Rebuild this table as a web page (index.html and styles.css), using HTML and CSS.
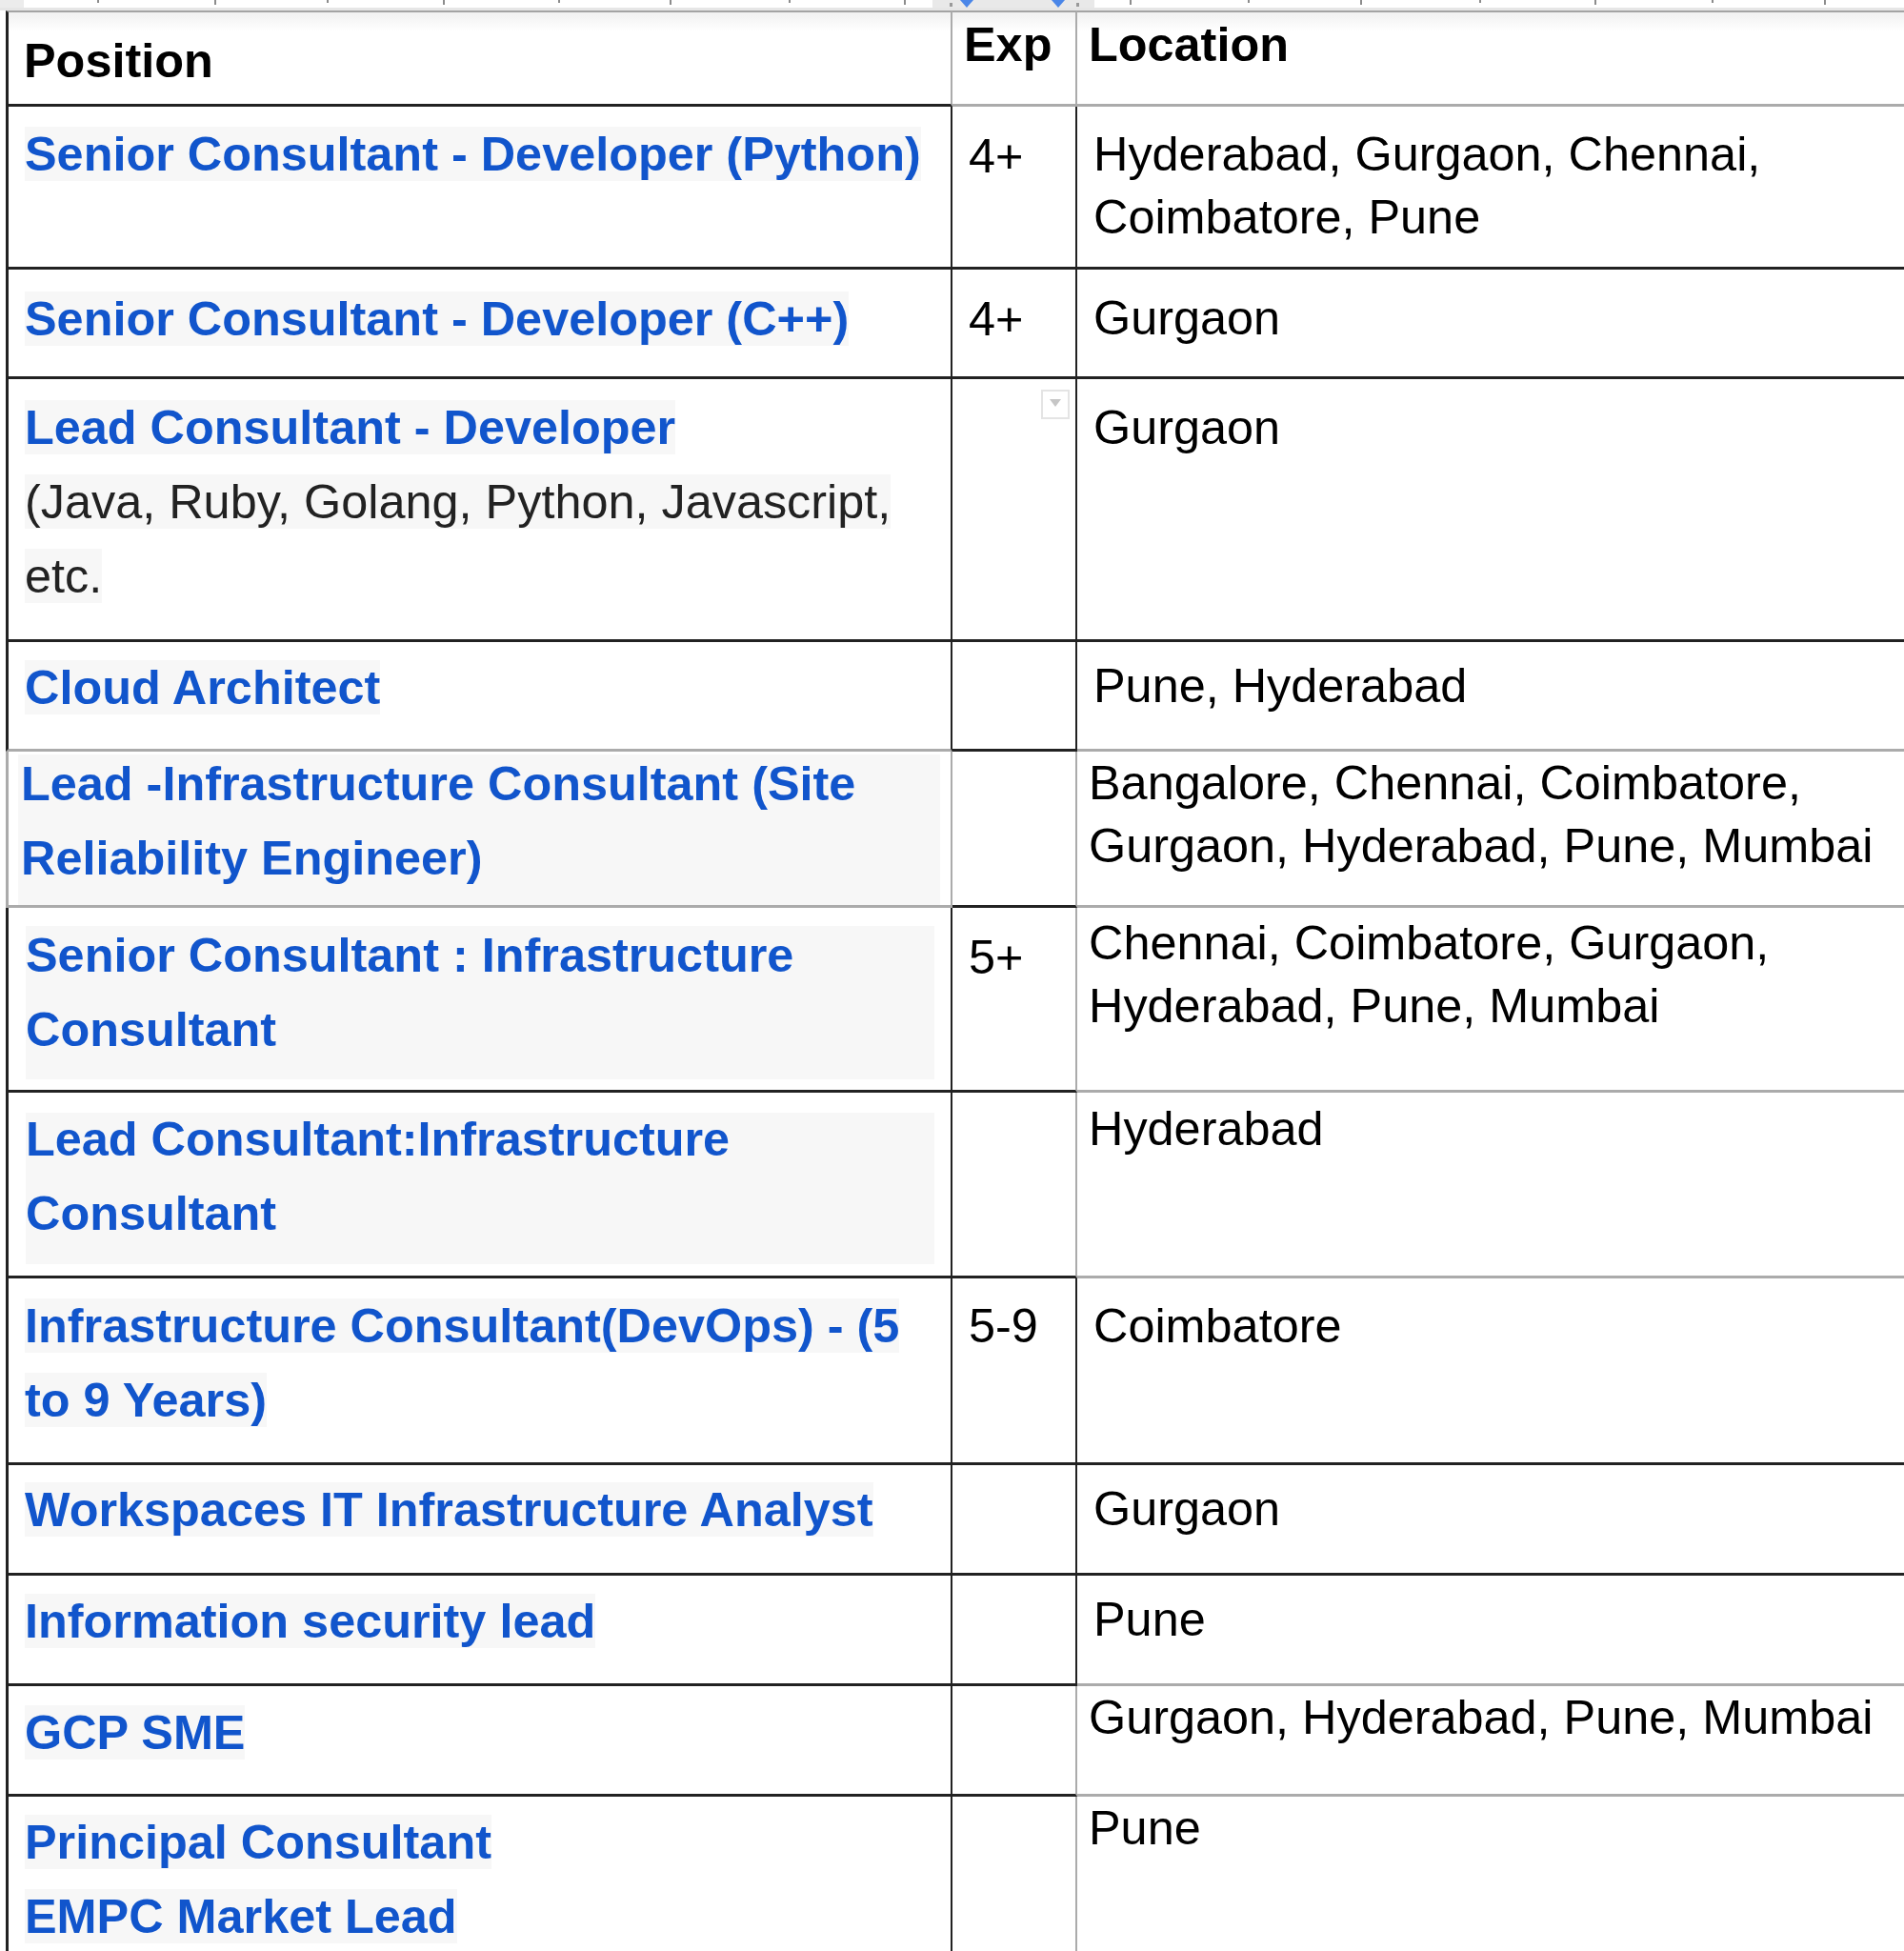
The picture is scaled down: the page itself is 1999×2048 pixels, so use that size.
FILE: index.html
```html
<!DOCTYPE html>
<html lang="en">
<head>
<meta charset="utf-8">
<title>Open positions</title>
<link rel="stylesheet" href="styles.css">
</head>
<body>
<div class="ruler">
  <svg width="1999" height="11" viewBox="0 0 1999 11" xmlns="http://www.w3.org/2000/svg">
    <rect x="0" y="0" width="25" height="9" fill="#ececec"/>
    <rect x="979" y="0" width="170" height="9" fill="#e9e9e9"/>
    <rect x="0" y="8" width="1999" height="3" fill="#e6e6e6"/>
    <g stroke="#8c8c8c" stroke-width="2">
      <line x1="103" y1="0" x2="103" y2="3"/>
      <line x1="226" y1="0" x2="226" y2="5"/>
      <line x1="344" y1="0" x2="344" y2="3"/>
      <line x1="466" y1="0" x2="466" y2="5"/>
      <line x1="587" y1="0" x2="587" y2="3"/>
      <line x1="704" y1="0" x2="704" y2="5"/>
      <line x1="829" y1="0" x2="829" y2="3"/>
      <line x1="950" y1="0" x2="950" y2="5"/>
      <line x1="1187" y1="0" x2="1187" y2="5"/>
      <line x1="1311" y1="0" x2="1311" y2="3"/>
      <line x1="1429" y1="0" x2="1429" y2="5"/>
      <line x1="1554" y1="0" x2="1554" y2="3"/>
      <line x1="1675" y1="0" x2="1675" y2="5"/>
      <line x1="1798" y1="0" x2="1798" y2="3"/>
      <line x1="1916" y1="0" x2="1916" y2="5"/>
    </g>
    <rect x="997" y="3" width="3" height="4" fill="#9a9a9a"/>
    <rect x="1130" y="3" width="3" height="4" fill="#9a9a9a"/>
    <polygon points="1008,0 1022,0 1015,8" fill="#4a86e8"/>
    <polygon points="1104,0 1118,0 1111,8" fill="#4a86e8"/>
  </svg>
</div>

<div class="sheet">
  <!-- header -->
  <div class="c pos hd bt bld brg bbd p12 pl16"><span class="hdr">Position</span></div>
  <div class="c exp hd bt brg bbg p1 pe12"><span class="hdr">Exp</span></div>
  <div class="c loc hd bt bbg p1 pl12"><span class="hdr">Location</span></div>

  <!-- row 1 -->
  <div class="c pos bld brd bbd p11"><span class="t">Senior Consultant - Developer (Python)</span></div>
  <div class="c exp brd bbd p19">4+</div>
  <div class="c loc bbd p17">Hyderabad, Gurgaon, Chennai,<br>Coimbatore, Pune</div>

  <!-- row 2 -->
  <div class="c pos bld brd bbd p13"><span class="t">Senior Consultant - Developer (C++)</span></div>
  <div class="c exp brd bbd p19">4+</div>
  <div class="c loc bbd p18">Gurgaon</div>

  <!-- row 3 -->
  <div class="c pos bld brd bbd p12"><span class="t">Lead Consultant - Developer</span><br><span class="note">(Java, Ruby, Golang, Python, Javascript,</span><br><span class="note">etc.</span></div>
  <div class="c exp brd bbd"><div class="dd"><span class="tri"></span></div></div>
  <div class="c loc bbd p18">Gurgaon</div>

  <!-- row 4 -->
  <div class="c pos bld brd bbg p9"><span class="t">Cloud Architect</span></div>
  <div class="c exp brd bbd"></div>
  <div class="c loc bbg p13">Pune, Hyderabad</div>

  <!-- row 5 -->
  <div class="c posb blg brg bbg"><div class="blk blk5"><div class="tx"><span class="t plain">Lead -Infrastructure Consultant (Site<br>Reliability Engineer)</span></div></div></div>
  <div class="c exp brg bbd"></div>
  <div class="c loc bbg p0 pl12">Bangalore, Chennai, Coimbatore,<br>Gurgaon, Hyderabad, Pune, Mumbai</div>

  <!-- row 6 -->
  <div class="c posb bld brd bbd"><div class="blk blk6"><div class="tx"><span class="t plain">Senior Consultant : Infrastructure<br>Consultant</span></div></div></div>
  <div class="c exp brg bbd p19">5+</div>
  <div class="c loc bbg p4 pl12">Chennai, Coimbatore, Gurgaon,<br>Hyderabad, Pune, Mumbai</div>

  <!-- row 7 -->
  <div class="c posb bld brd bbd"><div class="blk blk7"><div class="tx tx7"><span class="t plain">Lead Consultant:Infrastructure<br>Consultant</span></div></div></div>
  <div class="c exp brg bbd"></div>
  <div class="c loc bbg p5 pl12">Hyderabad</div>

  <!-- row 8 -->
  <div class="c pos bld brd bbd p11"><span class="t">Infrastructure Consultant(DevOps) - (5</span><br><span class="t">to 9 Years)</span></div>
  <div class="c exp brd bbd p17">5-9</div>
  <div class="c loc bbd p17">Coimbatore</div>

  <!-- row 9 -->
  <div class="c pos bld brd bbd p8"><span class="t">Workspaces IT Infrastructure Analyst</span></div>
  <div class="c exp brd bbd"></div>
  <div class="c loc bbd p13">Gurgaon</div>

  <!-- row 10 -->
  <div class="c pos bld brd bbd p9"><span class="t">Information security lead</span></div>
  <div class="c exp brd bbd"></div>
  <div class="c loc bbg p13">Pune</div>

  <!-- row 11 -->
  <div class="c pos bld brd bbd p10"><span class="t">GCP SME</span></div>
  <div class="c exp brg bbd"></div>
  <div class="c loc bbg p0 pl12">Gurgaon, Hyderabad, Pune, Mumbai</div>

  <!-- row 12 -->
  <div class="c pos bld brd p9"><span class="t">Principal Consultant</span><br><span class="t">EMPC Market Lead</span></div>
  <div class="c exp brg"></div>
  <div class="c loc p0 pl12">Pune</div>
</div>
</body>
</html>
```

FILE: styles.css
```css
html, body {
  margin: 0;
  padding: 0;
  overflow: hidden;
  background: #ffffff;
}

body {
  width: 1999px;
  height: 2048px;
  font-family: "Liberation Sans", Arial, Helvetica, sans-serif;
  font-size: 50.4px;
  color: #000000;
}

.ruler {
  height: 11px;
}

.ruler svg {
  display: block;
}

.sheet {
  display: grid;
  grid-template-columns: 994px 131px 868px;
  grid-template-rows: 101px 171px 115px 276px 115px 164px 194px 195px 196px 116px 116px 116px 162px;
  margin-left: 6px;
  width: 1993px;
}

.c {
  box-sizing: border-box;
  white-space: nowrap;
  overflow: hidden;
}

.pos {
  padding-left: 17px;
  line-height: 78px;
}

.posb {
  line-height: 78px;
}

.exp {
  padding-left: 17px;
  line-height: 66px;
}

.loc {
  padding-left: 17px;
  line-height: 66px;
}

.hd {
  background: linear-gradient(to bottom, #f1f1f1 0, #ffffff 20px);
}

.pos.hd {
  line-height: 78px;
}

.hdr {
  font-weight: 700;
  color: #000000;
}

/* borders */
.bt { border-top: 2px solid #a4a4a4; }
.bld { border-left: 3px solid #222222; }
.blg { border-left: 3px solid #ababab; }
.brd { border-right: 2px solid #222222; }
.brg { border-right: 2px solid #ababab; }
.bbd { border-bottom: 3px solid #222222; }
.bbg { border-bottom: 3px solid #ababab; }

/* vertical offsets */
.p0 { padding-top: 0; }
.p1 { padding-top: 1px; }
.p4 { padding-top: 4px; }
.p5 { padding-top: 5px; }
.p8 { padding-top: 8px; }
.p9 { padding-top: 9px; }
.p10 { padding-top: 10px; }
.p11 { padding-top: 11px; }
.p12 { padding-top: 12px; }
.p13 { padding-top: 13px; }
.p14 { padding-top: 14px; }
.p17 { padding-top: 17px; }
.p18 { padding-top: 18px; }
.p19 { padding-top: 19px; }
.p20 { padding-top: 20px; }

.pl12 { padding-left: 12px; }
.pl16 { padding-left: 16px; }
.pe12 { padding-left: 12px; }

/* position titles */
.t {
  color: #1155cc;
  font-weight: 700;
  background: #f7f7f7;
}

.t.plain {
  background: transparent;
}

.note {
  color: #222222;
  background: #f7f7f7;
}

.blk {
  display: flow-root;
  background: #f7f7f7;
}

.blk .tx {
  margin-top: -8px;
}

.blk .tx7 {
  margin-top: -11px;
}

.blk5 {
  margin: 3px 11px 0 10px;
  padding: 0 0 12px 3px;
}

.blk6 {
  margin: 19px 17px 0 18px;
  padding: 0 0 13px 0;
}

.blk7 {
  margin: 21px 17px 0 18px;
  padding: 0 0 14px 0;
}

/* small dropdown widget */
.dd {
  box-sizing: border-box;
  width: 30px;
  height: 31px;
  margin: 11px 6px 0 auto;
  border: 2px solid #e4e4e4;
  display: flex;
  align-items: flex-start;
  justify-content: center;
  padding-top: 8px;
}

.tri {
  width: 0;
  height: 0;
  border-left: 6px solid transparent;
  border-right: 6px solid transparent;
  border-top: 8px solid #c6c6c6;
}
```
